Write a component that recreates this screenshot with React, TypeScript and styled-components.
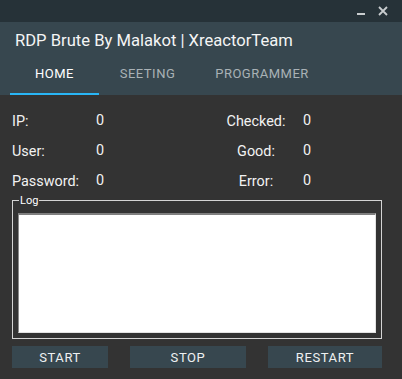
import React from "react";
import styled, { createGlobalStyle } from "styled-components";

const Global = createGlobalStyle`
  html, body { margin: 0; padding: 0; background: #333333; }
  body { font-family: Roboto, "Liberation Sans", sans-serif; }
  * { box-sizing: border-box; }
`;

const Window = styled.div`
  width: 402px;
  height: 379px;
  background: #333333;
  display: flex;
  flex-direction: column;
  overflow: hidden;
`;

const TitleBar = styled.div`
  height: 22px;
  background: #263238;
  display: flex;
  justify-content: flex-end;
  align-items: center;
  padding-right: 14px;
  gap: 12px;
`;

const WinIcon = styled.svg`
  display: block;
  width: 10px;
  height: 10px;
  color: #c9cdcf;
`;

const Header = styled.div`
  background: #37474f;
  display: flex;
  flex-direction: column;
`;

const Title = styled.div`
  padding: 9px 0 0 15px;
  font-size: 16.6px;
  line-height: 20px;
  color: #f4f5f5;
`;

const Tabs = styled.div`
  display: flex;
  padding-left: 10px;
`;

const Tab = styled.div<{ $w: number; $active?: boolean }>`
  width: ${(p) => p.$w}px;
  height: 44px;
  display: flex;
  align-items: center;
  justify-content: center;
  font-size: 13px;
  font-weight: 400;
  letter-spacing: 0.5px;
  text-transform: uppercase;
  color: ${(p) => (p.$active ? "#ffffff" : "#a9b2b6")};
  border-bottom: 2px solid ${(p) => (p.$active ? "#29b6f6" : "transparent")};
  padding-top: 2px;
`;

const Body = styled.div`
  flex: 1;
  display: flex;
  flex-direction: column;
  padding: 11px 20px 0 12px;
`;

const Stats = styled.div`
  display: grid;
  grid-template-columns: 84px 115px 90px 1fr;
  grid-auto-rows: 30px;
  align-items: center;
  font-size: 14.4px;
  color: #f2f2f2;
`;

const Label = styled.div<{ $center?: boolean }>`
  text-align: ${(p) => (p.$center ? "center" : "left")};
`;

const Value = styled.div<{ $pad?: number }>`
  padding-left: ${(p) => p.$pad ?? 0}px;
  margin-top: -2px;
`;

const LogBox = styled.fieldset`
  margin: -2px 0 0 0;
  padding: 5px 5px 5px 5px;
  border: 1px solid #d4d4d4;
  min-width: 0;
`;

const Legend = styled.legend`
  font-size: 11px;
  line-height: 13px;
  color: #ffffff;
  padding: 0 1px;
  margin-left: 1px;
`;

const LogArea = styled.textarea`
  display: block;
  width: 100%;
  height: 120px;
  margin: 1px 0 0 0;
  resize: none;
  background: #ffffff;
  border-style: solid;
  border-width: 2px 1px 1px 1px;
  border-color: #7f7f7f #e3e3e3 #e3e3e3 #8a8a8a;
  outline: none;
`;

const ButtonRow = styled.div`
  display: flex;
  justify-content: space-between;
  margin-top: 7px;
`;

const Button = styled.button<{ $w: number }>`
  width: ${(p) => p.$w}px;
  height: 22px;
  background: #37474f;
  border: none;
  color: #eef0f1;
  font-family: Roboto, "Liberation Sans", sans-serif;
  font-size: 13px;
  font-weight: 400;
  letter-spacing: 0.6px;
  padding: 0;
`;

export default function App() {
  return (
    <>
      <Global />
      <Window>
        <TitleBar>
          <WinIcon viewBox="0 0 10 10">
            <rect x="1" y="7" width="8" height="2" fill="currentColor" />
          </WinIcon>
          <WinIcon viewBox="0 0 10 10">
            <path d="M1 1 L9 9 M9 1 L1 9" stroke="currentColor" strokeWidth="1.8" />
          </WinIcon>
        </TitleBar>
        <Header>
          <Title>RDP Brute By Malakot | XreactorTeam</Title>
          <Tabs>
            <Tab $w={89} $active>HOME</Tab>
            <Tab $w={97}>SEETING</Tab>
            <Tab $w={132}>PROGRAMMER</Tab>
          </Tabs>
        </Header>
        <Body>
          <Stats>
            <Label>IP:</Label>
            <Value>0</Value>
            <Label $center>Checked:</Label>
            <Value $pad={2}>0</Value>
            <Label>User:</Label>
            <Value>0</Value>
            <Label $center>Good:</Label>
            <Value $pad={2}>0</Value>
            <Label>Password:</Label>
            <Value>0</Value>
            <Label $center>Error:</Label>
            <Value $pad={2}>0</Value>
          </Stats>
          <LogBox>
            <Legend>Log</Legend>
            <LogArea readOnly />
          </LogBox>
          <ButtonRow>
            <Button $w={96}>START</Button>
            <Button $w={116}>STOP</Button>
            <Button $w={114}>RESTART</Button>
          </ButtonRow>
        </Body>
      </Window>
    </>
  );
}
